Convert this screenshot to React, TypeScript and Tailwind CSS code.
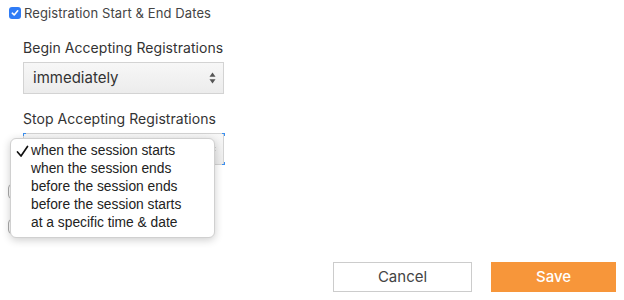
import React from "react";

const options = [
    "when the session starts",
    "when the session ends",
    "before the session ends",
    "before the session starts",
    "at a specific time & date",
];

function Arrows() {
    return (
        <svg width="7" height="12" viewBox="0 0 7 12" className="shrink-0">
            <path d="M3.5 0.5 L6.5 4.8 L0.5 4.8 Z" fill="#555" />
            <path d="M3.5 11.5 L6.5 7.2 L0.5 7.2 Z" fill="#555" />
        </svg>
    );
}

function FakeSelect({ value, focused }: { value: string; focused?: boolean }) {
    return (
        <div className="relative flex h-[32px] w-[201px] items-center justify-between border border-[#d3d3d3] bg-gradient-to-b from-[#f7f7f7] to-[#ececec] pl-[9px] pr-[7px]">
            <span className="text-[15px] text-[#333]">{value}</span>
            <Arrows />
            {focused && (
                <>
                    <span className="absolute -left-px -top-px h-[3px] w-[3px] border-l border-t border-[#3b8ff0]" />
                    <span className="absolute -right-[2px] -top-px h-[3px] w-[3px] border-r border-t border-[#3b8ff0]" />
                    <span className="absolute -bottom-px -right-[2px] h-[3px] w-[3px] border-b border-r border-[#3b8ff0]" />
                </>
            )}
        </div>
    );
}

export default function App() {
    return (
        <div className="relative h-[300px] w-[624px] overflow-hidden bg-white font-['Inter',sans-serif] text-[#444]">
            <div className="flex items-center gap-[3px] pl-[9px] pt-[6px]">
                <span className="flex h-[12px] w-[12px] items-center justify-center rounded-[3px] bg-[#2f7cf6]">
                    <svg width="8" height="8" viewBox="0 0 8 8">
                        <path d="M1.3 4.2 L3.2 6 L6.7 1.8" fill="none" stroke="white" strokeWidth="1.6" strokeLinecap="round" strokeLinejoin="round" />
                    </svg>
                </span>
                <span className="text-[13px] leading-[14px] tracking-[0.1px]">Registration Start &amp; End Dates</span>
            </div>

            <div className="pl-[23px]">
                <div className="mt-[19px] text-[14px] leading-[17px] tracking-[0.05px] text-[#333]">Begin Accepting Registrations</div>
                <div className="mt-[6px]">
                    <FakeSelect value="immediately" />
                </div>
                <div className="mt-[16px] text-[14px] leading-[17px] tracking-[0.05px] text-[#333]">Stop Accepting Registrations</div>
                <div className="mt-[6px]">
                    <FakeSelect value="" focused />
                </div>
            </div>

            <div className="mt-[19px] flex flex-col gap-[20px] pl-[8px]">
                <span className="h-[15px] w-[13px] rounded-[4px] border border-[#aaa]" />
                <span className="h-[15px] w-[13px] rounded-[4px] border border-[#aaa]" />
            </div>

            <div className="absolute bottom-[8px] right-[8px] flex gap-[19px]">
                <button type="button" className="h-[30px] w-[139px] border border-[#ccc] bg-white text-[15px] text-[#444]">
                    Cancel
                </button>
                <button type="button" className="h-[30px] w-[125px] bg-[#f7963a] text-[15px] font-medium text-white">
                    Save
                </button>
            </div>

            <div className="absolute left-[10px] top-[138px] w-[205px] rounded-[6px] border border-[#d0d0d0] bg-white pb-[5px] pt-[3px] font-['Liberation_Sans',sans-serif] text-[13.8px] text-[#222] shadow-[0_2px_8px_rgba(0,0,0,0.2)]">
                {options.map((o, i) => (
                    <div key={o} className="flex h-[18px] items-center">
                        <span className="flex w-[20px] justify-end pr-[2px] pl-[4px]">
                            {i === 0 && (
                                <svg width="13" height="13" viewBox="0 0 13 13">
                                    <path d="M1.5 7 L5 11 L11.5 1.5" fill="none" stroke="#111" strokeWidth="1.7" strokeLinecap="round" strokeLinejoin="round" />
                                </svg>
                            )}
                        </span>
                        <span>{o}</span>
                    </div>
                ))}
            </div>
        </div>
    );
}
